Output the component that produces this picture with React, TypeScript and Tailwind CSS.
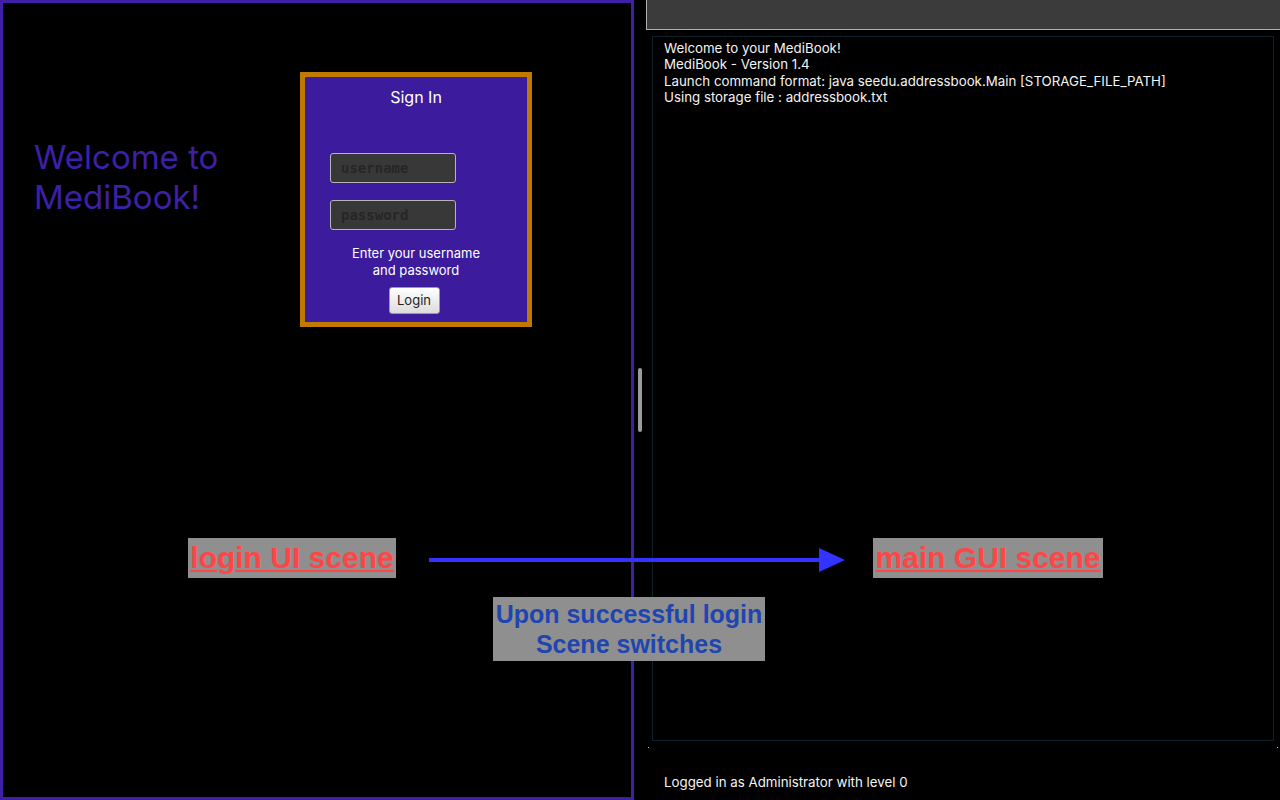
import React from 'react';

const uiFont = { fontFamily: 'Inter, "Noto Sans", sans-serif' };
const noteFont = { fontFamily: '"Liberation Sans", Arial, sans-serif' };

const consoleLines = [
    'Welcome to your MediBook!',
    'MediBook - Version 1.4',
    'Launch command format: java seedu.addressbook.Main [STORAGE_FILE_PATH]',
    'Using storage file : addressbook.txt',
];

const LoginScene: React.FC = () => (
    <div className="w-[634px] h-[800px] flex-shrink-0 border-[3px] border-[#3f1fa6] flex pl-[31px] pt-[69px]" style={uiFont}>
        <div className="w-[266px] mt-[65px] text-[33px] leading-[40px] text-[#3c21a8]">
            Welcome to<br />MediBook!
        </div>
        <div className="w-[232px] h-[255px] border-[5px] border-[#bf7a00] bg-[#3c1b9c] flex flex-col">
            <div className="pt-[10px] text-center text-[16px] leading-[20px] text-white">Sign In</div>
            <div className="ml-[25px] mt-[46px] flex flex-col gap-[17px]">
                <input
                    placeholder="username"
                    className="w-[126px] h-[30px] px-[10px] rounded-[3px] bg-[#383838] border border-[#b5b5b5] text-[14px] font-bold placeholder:text-[#262626] outline-none"
                    style={{ fontFamily: '"DejaVu Sans Mono", monospace' }}
                />
                <input
                    placeholder="password"
                    className="w-[126px] h-[30px] px-[10px] rounded-[3px] bg-[#383838] border border-[#b5b5b5] text-[14px] font-bold placeholder:text-[#262626] outline-none"
                    style={{ fontFamily: '"DejaVu Sans Mono", monospace' }}
                />
            </div>
            <p className="mt-[15px] text-center text-[13px] leading-[17px] text-white">
                Enter your username<br />and password
            </p>
            <div className="mt-[8px] flex justify-center pr-[4px]">
                <button className="w-[51px] h-[27px] rounded-[3px] border border-[#9a9a9a] bg-gradient-to-b from-[#ffffff] to-[#dcdcdc] text-[13px] text-[#222]">
                    Login
                </button>
            </div>
        </div>
    </div>
);

const MainScene: React.FC = () => (
    <div className="flex-1 h-[800px] flex" style={uiFont}>
        <div className="w-[12px] flex items-center justify-center">
            <div className="w-[4px] h-[64px] rounded-full bg-[#9b9b9b]"></div>
        </div>
        <div className="flex-1 flex flex-col">
            <div className="h-[30px] bg-[#3b3b3b] border-l border-b border-[#b0b0b0]"></div>
            <div className="flex-1 flex flex-col px-[6px] pt-[6px]">
                <div className="h-[705px] border border-[#0c2129] px-[11px] pt-[3px] text-[13.3px] leading-[16.3px] text-[#f4f4f4]">
                    {consoleLines.map(line => (
                        <div key={line}>{line}</div>
                    ))}
                </div>
                <div className="flex justify-between mt-[6px] -mx-[4px]">
                    <span className="w-[1px] h-[1px] bg-[#cfcfcf]"></span>
                    <span className="w-[1px] h-[1px] bg-[#cfcfcf]"></span>
                </div>
                <div className="mt-[26px] px-[12px] text-[13.3px] leading-[16px] text-[#f4f4f4]">
                    Logged in as Administrator with level 0
                </div>
            </div>
        </div>
    </div>
);

export default function App() {
    return (
        <div className="relative w-[1280px] h-[800px] overflow-hidden bg-black flex">
            <LoginScene />
            <MainScene />

            {/* annotations drawn over the screenshot */}
            <div className="absolute left-[188px] top-[538px] w-[208px] h-[40px] bg-[#8f8f8f] flex items-center justify-center" style={noteFont}>
                <span className="text-[30px] leading-[34px] font-bold text-[#ff4646] underline decoration-2 underline-offset-2">login UI scene</span>
            </div>
            <div className="absolute left-[873px] top-[538px] w-[230px] h-[40px] bg-[#8f8f8f] flex items-center justify-center" style={noteFont}>
                <span className="text-[30px] leading-[34px] font-bold text-[#ff4646] underline decoration-2 underline-offset-2">main GUI scene</span>
            </div>
            <svg className="absolute left-[429px] top-[547px]" width="420" height="26" viewBox="0 0 420 26">
                <rect x="0" y="11" width="392" height="4" fill="#3333ff" />
                <polygon points="390,1 416,13 390,25" fill="#3333ff" />
            </svg>
            <div className="absolute left-[493px] top-[597px] w-[272px] h-[64px] bg-[#8f8f8f] flex flex-col items-center justify-center text-[25px] leading-[30px] font-bold text-[#1f45b0]" style={noteFont}>
                <span>Upon successful login</span>
                <span>Scene switches</span>
            </div>
        </div>
    );
}
